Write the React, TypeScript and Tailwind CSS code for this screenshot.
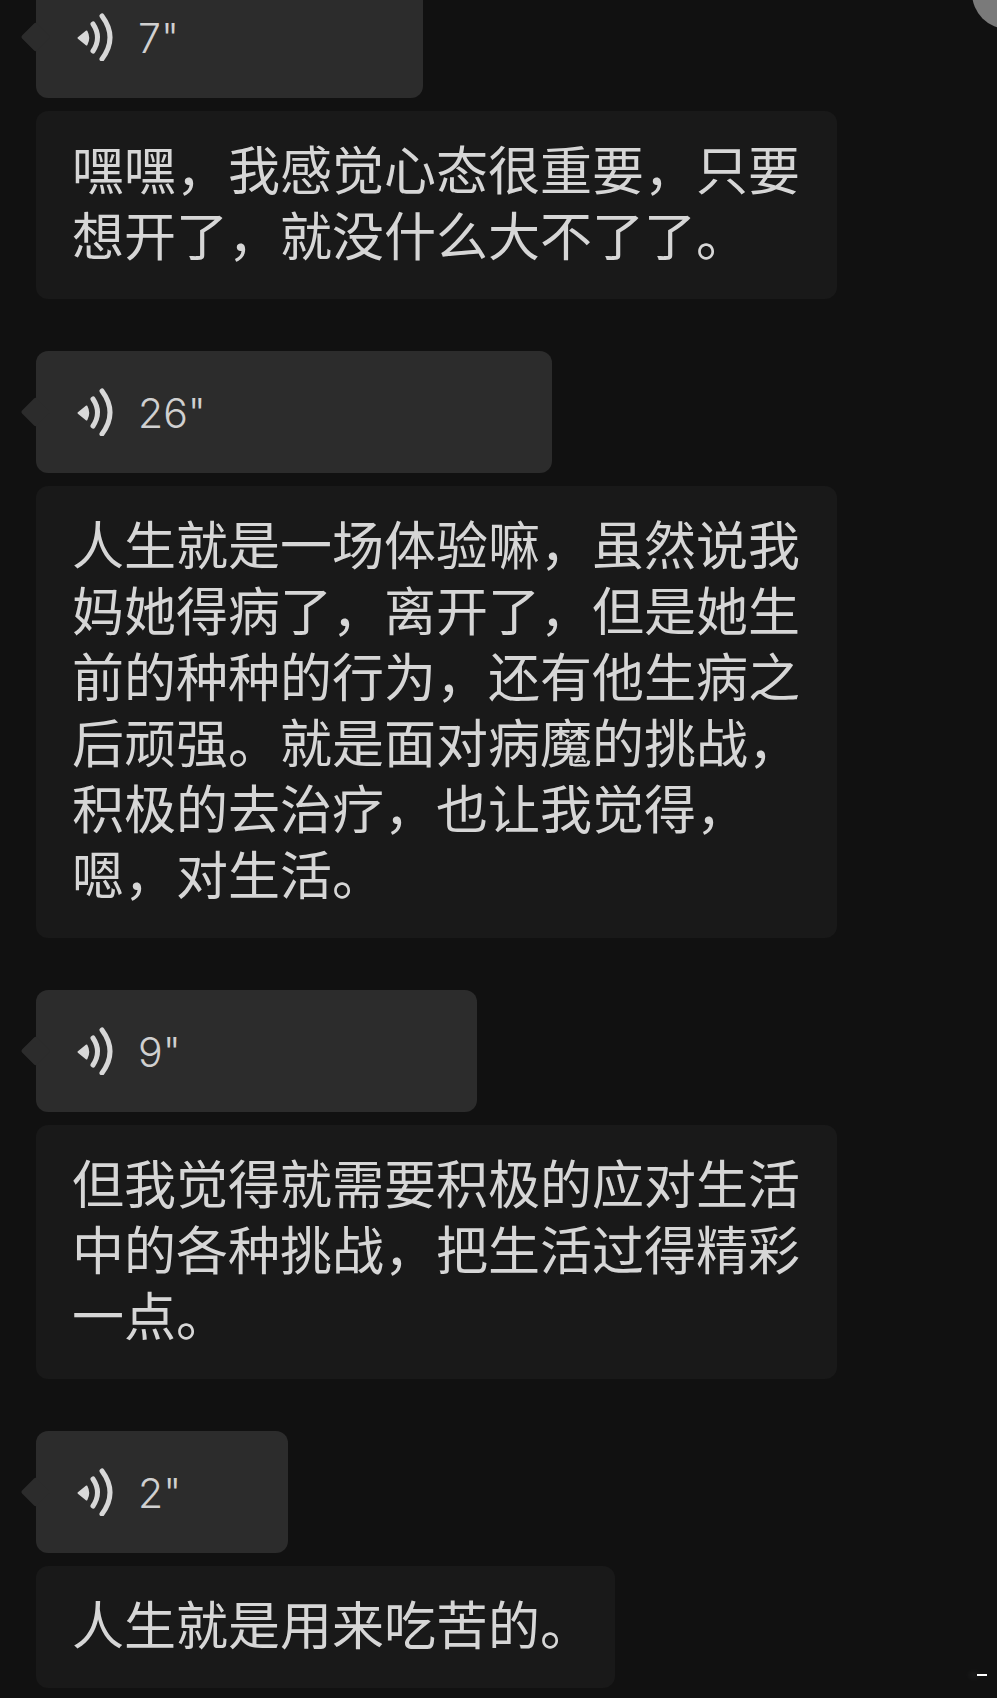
const messages = [
  {
    seconds: '7"',
    voiceWidth: "w-[387px]",
    textWidth: "w-[801px]",
    lines: ["嘿嘿，我感觉心态很重要，只要", "想开了，就没什么大不了了。"],
  },
  {
    seconds: '26"',
    voiceWidth: "w-[516px]",
    textWidth: "w-[801px]",
    lines: [
      "人生就是一场体验嘛，虽然说我",
      "妈她得病了，离开了，但是她生",
      "前的种种的行为，还有他生病之",
      "后顽强。就是面对病魔的挑战，",
      "积极的去治疗，也让我觉得，",
      "嗯，对生活。",
    ],
  },
  {
    seconds: '9"',
    voiceWidth: "w-[441px]",
    textWidth: "w-[801px]",
    lines: ["但我觉得就需要积极的应对生活", "中的各种挑战，把生活过得精彩", "一点。"],
  },
  {
    seconds: '2"',
    voiceWidth: "w-[252px]",
    textWidth: "w-[579px]",
    lines: ["人生就是用来吃苦的。"],
  },
];

function VoiceIcon() {
  return (
    <svg width="37" height="48" viewBox="0 0 37 48" fill="none" className="shrink-0">
      <path d="M2.5 25 L10.5 18.5 Q14 25 10.5 31.5 Z" fill="#d8d8d8" stroke="#d8d8d8" strokeWidth="2" strokeLinejoin="round" />
      <path d="M17 11 Q26 24.5 17 38" stroke="#d8d8d8" strokeWidth="5" strokeLinecap="round" />
      <path d="M26 3 Q42 24.5 26 46" stroke="#d8d8d8" strokeWidth="5" strokeLinecap="round" />
    </svg>
  );
}

function VoiceBubble({ seconds, width }: { seconds: string; width: string }) {
  return (
    <div className={`relative flex h-[122px] items-center gap-[25px] rounded-[12px] bg-[#2c2c2c] pl-[40px] ${width}`}>
      {/* tail */}
      <div className="absolute left-[-11px] top-[50%] h-[21px] w-[21px] -translate-y-1/2 rotate-45 rounded-[2px] bg-[#2c2c2c]" />
      <div className="relative">
        <VoiceIcon />
      </div>
      <span className="relative pt-[2px] text-[41px] font-light leading-none text-[#d0d0d0] font-['Inter','Liberation_Sans',sans-serif]">{seconds}</span>
    </div>
  );
}

function TextBubble({ lines, width }: { lines: string[]; width: string }) {
  return (
    <div className={`rounded-[12px] bg-[#191919] px-[36px] pb-[32px] pt-[24px] text-[52px] leading-[66px] text-[#d6d6d6] font-['Noto_Sans_CJK_SC',sans-serif] ${width}`}>
      {lines.map((line) => (
        <div key={line} className="whitespace-nowrap">
          {line}
        </div>
      ))}
    </div>
  );
}

export default function App() {
  return (
    <div className="relative h-[1698px] w-[997px] overflow-hidden bg-[#111111]">
      <div className="mt-[-24px] flex flex-col gap-[52px] pl-[36px]">
        {messages.map((m) => (
          <div key={m.seconds} className="flex flex-col gap-[13px]">
            <VoiceBubble seconds={m.seconds} width={m.voiceWidth} />
            <TextBubble lines={m.lines} width={m.textWidth} />
          </div>
        ))}
      </div>
      {/* avatar corner */}
      <div className="absolute right-[-47px] top-[-43px] h-[72px] w-[72px] rounded-full bg-[#7a7a7a]" />
      {/* watermark dash */}
      <div className="absolute left-[977px] top-[1674px] h-[2px] w-[10px] bg-white shadow-[-8px_0_6px_rgba(255,255,255,0.15)]" />
    </div>
  );
}
